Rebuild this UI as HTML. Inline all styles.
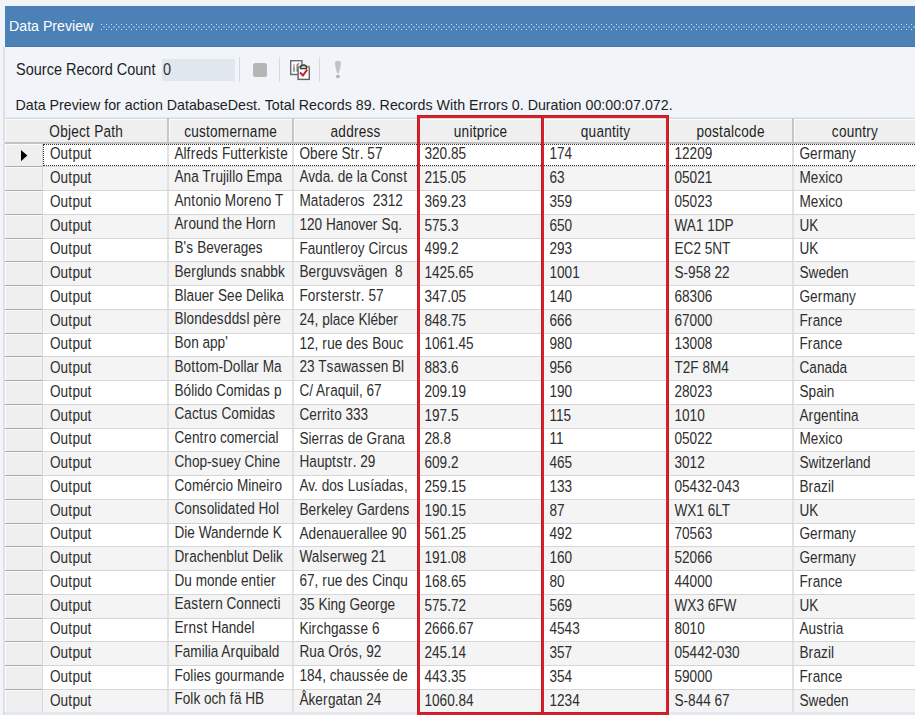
<!DOCTYPE html><html><head><meta charset="utf-8"><style>
*{margin:0;padding:0;box-sizing:border-box}
html,body{width:915px;height:715px;overflow:hidden;background:#f1f5f9;font-family:"Liberation Sans",sans-serif;position:relative}
.a{position:absolute}
.t{position:absolute;white-space:pre;line-height:1}
.t i{font-style:normal;letter-spacing:0.45px}
</style></head><body><div class="a" style="left:3px;top:47px;width:2px;height:668px;background:#dde1e6"></div>
<div class="a" style="left:5px;top:6px;width:910px;height:41px;background:#4b81b7"></div>
<div class="a" style="left:5px;top:46px;width:910px;height:1px;background:#4675a6"></div>
<div class="t" style="left:9px;top:18.980px;font-size:14.2px;color:#fff;transform:scaleY(1.07);transform-origin:0 12.020px;">Data Preview</div>
<svg class="a" style="left:0;top:0" width="915" height="50"><g fill="#d6ebff"><rect x="101" y="24" width="1" height="1"/><rect x="101" y="29" width="1" height="1"/><rect x="103" y="26.5" width="2" height="1" fill="#a9cdf2"/><rect x="106" y="24" width="1" height="1"/><rect x="106" y="29" width="1" height="1"/><rect x="108" y="26.5" width="2" height="1" fill="#a9cdf2"/><rect x="111" y="24" width="1" height="1"/><rect x="111" y="29" width="1" height="1"/><rect x="113" y="26.5" width="2" height="1" fill="#a9cdf2"/><rect x="116" y="24" width="1" height="1"/><rect x="116" y="29" width="1" height="1"/><rect x="118" y="26.5" width="2" height="1" fill="#a9cdf2"/><rect x="121" y="24" width="1" height="1"/><rect x="121" y="29" width="1" height="1"/><rect x="123" y="26.5" width="2" height="1" fill="#a9cdf2"/><rect x="126" y="24" width="1" height="1"/><rect x="126" y="29" width="1" height="1"/><rect x="128" y="26.5" width="2" height="1" fill="#a9cdf2"/><rect x="131" y="24" width="1" height="1"/><rect x="131" y="29" width="1" height="1"/><rect x="133" y="26.5" width="2" height="1" fill="#a9cdf2"/><rect x="136" y="24" width="1" height="1"/><rect x="136" y="29" width="1" height="1"/><rect x="138" y="26.5" width="2" height="1" fill="#a9cdf2"/><rect x="141" y="24" width="1" height="1"/><rect x="141" y="29" width="1" height="1"/><rect x="143" y="26.5" width="2" height="1" fill="#a9cdf2"/><rect x="146" y="24" width="1" height="1"/><rect x="146" y="29" width="1" height="1"/><rect x="148" y="26.5" width="2" height="1" fill="#a9cdf2"/><rect x="151" y="24" width="1" height="1"/><rect x="151" y="29" width="1" height="1"/><rect x="153" y="26.5" width="2" height="1" fill="#a9cdf2"/><rect x="156" y="24" width="1" height="1"/><rect x="156" y="29" width="1" height="1"/><rect x="158" y="26.5" width="2" height="1" fill="#a9cdf2"/><rect x="161" y="24" width="1" height="1"/><rect x="161" y="29" width="1" height="1"/><rect x="163" y="26.5" width="2" height="1" fill="#a9cdf2"/><rect x="166" y="24" width="1" height="1"/><rect x="166" y="29" width="1" height="1"/><rect x="168" y="26.5" width="2" height="1" fill="#a9cdf2"/><rect x="171" y="24" width="1" height="1"/><rect x="171" y="29" width="1" height="1"/><rect x="173" y="26.5" width="2" height="1" fill="#a9cdf2"/><rect x="176" y="24" width="1" height="1"/><rect x="176" y="29" width="1" height="1"/><rect x="178" y="26.5" width="2" height="1" fill="#a9cdf2"/><rect x="181" y="24" width="1" height="1"/><rect x="181" y="29" width="1" height="1"/><rect x="183" y="26.5" width="2" height="1" fill="#a9cdf2"/><rect x="186" y="24" width="1" height="1"/><rect x="186" y="29" width="1" height="1"/><rect x="188" y="26.5" width="2" height="1" fill="#a9cdf2"/><rect x="191" y="24" width="1" height="1"/><rect x="191" y="29" width="1" height="1"/><rect x="193" y="26.5" width="2" height="1" fill="#a9cdf2"/><rect x="196" y="24" width="1" height="1"/><rect x="196" y="29" width="1" height="1"/><rect x="198" y="26.5" width="2" height="1" fill="#a9cdf2"/><rect x="201" y="24" width="1" height="1"/><rect x="201" y="29" width="1" height="1"/><rect x="203" y="26.5" width="2" height="1" fill="#a9cdf2"/><rect x="206" y="24" width="1" height="1"/><rect x="206" y="29" width="1" height="1"/><rect x="208" y="26.5" width="2" height="1" fill="#a9cdf2"/><rect x="211" y="24" width="1" height="1"/><rect x="211" y="29" width="1" height="1"/><rect x="213" y="26.5" width="2" height="1" fill="#a9cdf2"/><rect x="216" y="24" width="1" height="1"/><rect x="216" y="29" width="1" height="1"/><rect x="218" y="26.5" width="2" height="1" fill="#a9cdf2"/><rect x="221" y="24" width="1" height="1"/><rect x="221" y="29" width="1" height="1"/><rect x="223" y="26.5" width="2" height="1" fill="#a9cdf2"/><rect x="226" y="24" width="1" height="1"/><rect x="226" y="29" width="1" height="1"/><rect x="228" y="26.5" width="2" height="1" fill="#a9cdf2"/><rect x="231" y="24" width="1" height="1"/><rect x="231" y="29" width="1" height="1"/><rect x="233" y="26.5" width="2" height="1" fill="#a9cdf2"/><rect x="236" y="24" width="1" height="1"/><rect x="236" y="29" width="1" height="1"/><rect x="238" y="26.5" width="2" height="1" fill="#a9cdf2"/><rect x="241" y="24" width="1" height="1"/><rect x="241" y="29" width="1" height="1"/><rect x="243" y="26.5" width="2" height="1" fill="#a9cdf2"/><rect x="246" y="24" width="1" height="1"/><rect x="246" y="29" width="1" height="1"/><rect x="248" y="26.5" width="2" height="1" fill="#a9cdf2"/><rect x="251" y="24" width="1" height="1"/><rect x="251" y="29" width="1" height="1"/><rect x="253" y="26.5" width="2" height="1" fill="#a9cdf2"/><rect x="256" y="24" width="1" height="1"/><rect x="256" y="29" width="1" height="1"/><rect x="258" y="26.5" width="2" height="1" fill="#a9cdf2"/><rect x="261" y="24" width="1" height="1"/><rect x="261" y="29" width="1" height="1"/><rect x="263" y="26.5" width="2" height="1" fill="#a9cdf2"/><rect x="266" y="24" width="1" height="1"/><rect x="266" y="29" width="1" height="1"/><rect x="268" y="26.5" width="2" height="1" fill="#a9cdf2"/><rect x="271" y="24" width="1" height="1"/><rect x="271" y="29" width="1" height="1"/><rect x="273" y="26.5" width="2" height="1" fill="#a9cdf2"/><rect x="276" y="24" width="1" height="1"/><rect x="276" y="29" width="1" height="1"/><rect x="278" y="26.5" width="2" height="1" fill="#a9cdf2"/><rect x="281" y="24" width="1" height="1"/><rect x="281" y="29" width="1" height="1"/><rect x="283" y="26.5" width="2" height="1" fill="#a9cdf2"/><rect x="286" y="24" width="1" height="1"/><rect x="286" y="29" width="1" height="1"/><rect x="288" y="26.5" width="2" height="1" fill="#a9cdf2"/><rect x="291" y="24" width="1" height="1"/><rect x="291" y="29" width="1" height="1"/><rect x="293" y="26.5" width="2" height="1" fill="#a9cdf2"/><rect x="296" y="24" width="1" height="1"/><rect x="296" y="29" width="1" height="1"/><rect x="298" y="26.5" width="2" height="1" fill="#a9cdf2"/><rect x="301" y="24" width="1" height="1"/><rect x="301" y="29" width="1" height="1"/><rect x="303" y="26.5" width="2" height="1" fill="#a9cdf2"/><rect x="306" y="24" width="1" height="1"/><rect x="306" y="29" width="1" height="1"/><rect x="308" y="26.5" width="2" height="1" fill="#a9cdf2"/><rect x="311" y="24" width="1" height="1"/><rect x="311" y="29" width="1" height="1"/><rect x="313" y="26.5" width="2" height="1" fill="#a9cdf2"/><rect x="316" y="24" width="1" height="1"/><rect x="316" y="29" width="1" height="1"/><rect x="318" y="26.5" width="2" height="1" fill="#a9cdf2"/><rect x="321" y="24" width="1" height="1"/><rect x="321" y="29" width="1" height="1"/><rect x="323" y="26.5" width="2" height="1" fill="#a9cdf2"/><rect x="326" y="24" width="1" height="1"/><rect x="326" y="29" width="1" height="1"/><rect x="328" y="26.5" width="2" height="1" fill="#a9cdf2"/><rect x="331" y="24" width="1" height="1"/><rect x="331" y="29" width="1" height="1"/><rect x="333" y="26.5" width="2" height="1" fill="#a9cdf2"/><rect x="336" y="24" width="1" height="1"/><rect x="336" y="29" width="1" height="1"/><rect x="338" y="26.5" width="2" height="1" fill="#a9cdf2"/><rect x="341" y="24" width="1" height="1"/><rect x="341" y="29" width="1" height="1"/><rect x="343" y="26.5" width="2" height="1" fill="#a9cdf2"/><rect x="346" y="24" width="1" height="1"/><rect x="346" y="29" width="1" height="1"/><rect x="348" y="26.5" width="2" height="1" fill="#a9cdf2"/><rect x="351" y="24" width="1" height="1"/><rect x="351" y="29" width="1" height="1"/><rect x="353" y="26.5" width="2" height="1" fill="#a9cdf2"/><rect x="356" y="24" width="1" height="1"/><rect x="356" y="29" width="1" height="1"/><rect x="358" y="26.5" width="2" height="1" fill="#a9cdf2"/><rect x="361" y="24" width="1" height="1"/><rect x="361" y="29" width="1" height="1"/><rect x="363" y="26.5" width="2" height="1" fill="#a9cdf2"/><rect x="366" y="24" width="1" height="1"/><rect x="366" y="29" width="1" height="1"/><rect x="368" y="26.5" width="2" height="1" fill="#a9cdf2"/><rect x="371" y="24" width="1" height="1"/><rect x="371" y="29" width="1" height="1"/><rect x="373" y="26.5" width="2" height="1" fill="#a9cdf2"/><rect x="376" y="24" width="1" height="1"/><rect x="376" y="29" width="1" height="1"/><rect x="378" y="26.5" width="2" height="1" fill="#a9cdf2"/><rect x="381" y="24" width="1" height="1"/><rect x="381" y="29" width="1" height="1"/><rect x="383" y="26.5" width="2" height="1" fill="#a9cdf2"/><rect x="386" y="24" width="1" height="1"/><rect x="386" y="29" width="1" height="1"/><rect x="388" y="26.5" width="2" height="1" fill="#a9cdf2"/><rect x="391" y="24" width="1" height="1"/><rect x="391" y="29" width="1" height="1"/><rect x="393" y="26.5" width="2" height="1" fill="#a9cdf2"/><rect x="396" y="24" width="1" height="1"/><rect x="396" y="29" width="1" height="1"/><rect x="398" y="26.5" width="2" height="1" fill="#a9cdf2"/><rect x="401" y="24" width="1" height="1"/><rect x="401" y="29" width="1" height="1"/><rect x="403" y="26.5" width="2" height="1" fill="#a9cdf2"/><rect x="406" y="24" width="1" height="1"/><rect x="406" y="29" width="1" height="1"/><rect x="408" y="26.5" width="2" height="1" fill="#a9cdf2"/><rect x="411" y="24" width="1" height="1"/><rect x="411" y="29" width="1" height="1"/><rect x="413" y="26.5" width="2" height="1" fill="#a9cdf2"/><rect x="416" y="24" width="1" height="1"/><rect x="416" y="29" width="1" height="1"/><rect x="418" y="26.5" width="2" height="1" fill="#a9cdf2"/><rect x="421" y="24" width="1" height="1"/><rect x="421" y="29" width="1" height="1"/><rect x="423" y="26.5" width="2" height="1" fill="#a9cdf2"/><rect x="426" y="24" width="1" height="1"/><rect x="426" y="29" width="1" height="1"/><rect x="428" y="26.5" width="2" height="1" fill="#a9cdf2"/><rect x="431" y="24" width="1" height="1"/><rect x="431" y="29" width="1" height="1"/><rect x="433" y="26.5" width="2" height="1" fill="#a9cdf2"/><rect x="436" y="24" width="1" height="1"/><rect x="436" y="29" width="1" height="1"/><rect x="438" y="26.5" width="2" height="1" fill="#a9cdf2"/><rect x="441" y="24" width="1" height="1"/><rect x="441" y="29" width="1" height="1"/><rect x="443" y="26.5" width="2" height="1" fill="#a9cdf2"/><rect x="446" y="24" width="1" height="1"/><rect x="446" y="29" width="1" height="1"/><rect x="448" y="26.5" width="2" height="1" fill="#a9cdf2"/><rect x="451" y="24" width="1" height="1"/><rect x="451" y="29" width="1" height="1"/><rect x="453" y="26.5" width="2" height="1" fill="#a9cdf2"/><rect x="456" y="24" width="1" height="1"/><rect x="456" y="29" width="1" height="1"/><rect x="458" y="26.5" width="2" height="1" fill="#a9cdf2"/><rect x="461" y="24" width="1" height="1"/><rect x="461" y="29" width="1" height="1"/><rect x="463" y="26.5" width="2" height="1" fill="#a9cdf2"/><rect x="466" y="24" width="1" height="1"/><rect x="466" y="29" width="1" height="1"/><rect x="468" y="26.5" width="2" height="1" fill="#a9cdf2"/><rect x="471" y="24" width="1" height="1"/><rect x="471" y="29" width="1" height="1"/><rect x="473" y="26.5" width="2" height="1" fill="#a9cdf2"/><rect x="476" y="24" width="1" height="1"/><rect x="476" y="29" width="1" height="1"/><rect x="478" y="26.5" width="2" height="1" fill="#a9cdf2"/><rect x="481" y="24" width="1" height="1"/><rect x="481" y="29" width="1" height="1"/><rect x="483" y="26.5" width="2" height="1" fill="#a9cdf2"/><rect x="486" y="24" width="1" height="1"/><rect x="486" y="29" width="1" height="1"/><rect x="488" y="26.5" width="2" height="1" fill="#a9cdf2"/><rect x="491" y="24" width="1" height="1"/><rect x="491" y="29" width="1" height="1"/><rect x="493" y="26.5" width="2" height="1" fill="#a9cdf2"/><rect x="496" y="24" width="1" height="1"/><rect x="496" y="29" width="1" height="1"/><rect x="498" y="26.5" width="2" height="1" fill="#a9cdf2"/><rect x="501" y="24" width="1" height="1"/><rect x="501" y="29" width="1" height="1"/><rect x="503" y="26.5" width="2" height="1" fill="#a9cdf2"/><rect x="506" y="24" width="1" height="1"/><rect x="506" y="29" width="1" height="1"/><rect x="508" y="26.5" width="2" height="1" fill="#a9cdf2"/><rect x="511" y="24" width="1" height="1"/><rect x="511" y="29" width="1" height="1"/><rect x="513" y="26.5" width="2" height="1" fill="#a9cdf2"/><rect x="516" y="24" width="1" height="1"/><rect x="516" y="29" width="1" height="1"/><rect x="518" y="26.5" width="2" height="1" fill="#a9cdf2"/><rect x="521" y="24" width="1" height="1"/><rect x="521" y="29" width="1" height="1"/><rect x="523" y="26.5" width="2" height="1" fill="#a9cdf2"/><rect x="526" y="24" width="1" height="1"/><rect x="526" y="29" width="1" height="1"/><rect x="528" y="26.5" width="2" height="1" fill="#a9cdf2"/><rect x="531" y="24" width="1" height="1"/><rect x="531" y="29" width="1" height="1"/><rect x="533" y="26.5" width="2" height="1" fill="#a9cdf2"/><rect x="536" y="24" width="1" height="1"/><rect x="536" y="29" width="1" height="1"/><rect x="538" y="26.5" width="2" height="1" fill="#a9cdf2"/><rect x="541" y="24" width="1" height="1"/><rect x="541" y="29" width="1" height="1"/><rect x="543" y="26.5" width="2" height="1" fill="#a9cdf2"/><rect x="546" y="24" width="1" height="1"/><rect x="546" y="29" width="1" height="1"/><rect x="548" y="26.5" width="2" height="1" fill="#a9cdf2"/><rect x="551" y="24" width="1" height="1"/><rect x="551" y="29" width="1" height="1"/><rect x="553" y="26.5" width="2" height="1" fill="#a9cdf2"/><rect x="556" y="24" width="1" height="1"/><rect x="556" y="29" width="1" height="1"/><rect x="558" y="26.5" width="2" height="1" fill="#a9cdf2"/><rect x="561" y="24" width="1" height="1"/><rect x="561" y="29" width="1" height="1"/><rect x="563" y="26.5" width="2" height="1" fill="#a9cdf2"/><rect x="566" y="24" width="1" height="1"/><rect x="566" y="29" width="1" height="1"/><rect x="568" y="26.5" width="2" height="1" fill="#a9cdf2"/><rect x="571" y="24" width="1" height="1"/><rect x="571" y="29" width="1" height="1"/><rect x="573" y="26.5" width="2" height="1" fill="#a9cdf2"/><rect x="576" y="24" width="1" height="1"/><rect x="576" y="29" width="1" height="1"/><rect x="578" y="26.5" width="2" height="1" fill="#a9cdf2"/><rect x="581" y="24" width="1" height="1"/><rect x="581" y="29" width="1" height="1"/><rect x="583" y="26.5" width="2" height="1" fill="#a9cdf2"/><rect x="586" y="24" width="1" height="1"/><rect x="586" y="29" width="1" height="1"/><rect x="588" y="26.5" width="2" height="1" fill="#a9cdf2"/><rect x="591" y="24" width="1" height="1"/><rect x="591" y="29" width="1" height="1"/><rect x="593" y="26.5" width="2" height="1" fill="#a9cdf2"/><rect x="596" y="24" width="1" height="1"/><rect x="596" y="29" width="1" height="1"/><rect x="598" y="26.5" width="2" height="1" fill="#a9cdf2"/><rect x="601" y="24" width="1" height="1"/><rect x="601" y="29" width="1" height="1"/><rect x="603" y="26.5" width="2" height="1" fill="#a9cdf2"/><rect x="606" y="24" width="1" height="1"/><rect x="606" y="29" width="1" height="1"/><rect x="608" y="26.5" width="2" height="1" fill="#a9cdf2"/><rect x="611" y="24" width="1" height="1"/><rect x="611" y="29" width="1" height="1"/><rect x="613" y="26.5" width="2" height="1" fill="#a9cdf2"/><rect x="616" y="24" width="1" height="1"/><rect x="616" y="29" width="1" height="1"/><rect x="618" y="26.5" width="2" height="1" fill="#a9cdf2"/><rect x="621" y="24" width="1" height="1"/><rect x="621" y="29" width="1" height="1"/><rect x="623" y="26.5" width="2" height="1" fill="#a9cdf2"/><rect x="626" y="24" width="1" height="1"/><rect x="626" y="29" width="1" height="1"/><rect x="628" y="26.5" width="2" height="1" fill="#a9cdf2"/><rect x="631" y="24" width="1" height="1"/><rect x="631" y="29" width="1" height="1"/><rect x="633" y="26.5" width="2" height="1" fill="#a9cdf2"/><rect x="636" y="24" width="1" height="1"/><rect x="636" y="29" width="1" height="1"/><rect x="638" y="26.5" width="2" height="1" fill="#a9cdf2"/><rect x="641" y="24" width="1" height="1"/><rect x="641" y="29" width="1" height="1"/><rect x="643" y="26.5" width="2" height="1" fill="#a9cdf2"/><rect x="646" y="24" width="1" height="1"/><rect x="646" y="29" width="1" height="1"/><rect x="648" y="26.5" width="2" height="1" fill="#a9cdf2"/><rect x="651" y="24" width="1" height="1"/><rect x="651" y="29" width="1" height="1"/><rect x="653" y="26.5" width="2" height="1" fill="#a9cdf2"/><rect x="656" y="24" width="1" height="1"/><rect x="656" y="29" width="1" height="1"/><rect x="658" y="26.5" width="2" height="1" fill="#a9cdf2"/><rect x="661" y="24" width="1" height="1"/><rect x="661" y="29" width="1" height="1"/><rect x="663" y="26.5" width="2" height="1" fill="#a9cdf2"/><rect x="666" y="24" width="1" height="1"/><rect x="666" y="29" width="1" height="1"/><rect x="668" y="26.5" width="2" height="1" fill="#a9cdf2"/><rect x="671" y="24" width="1" height="1"/><rect x="671" y="29" width="1" height="1"/><rect x="673" y="26.5" width="2" height="1" fill="#a9cdf2"/><rect x="676" y="24" width="1" height="1"/><rect x="676" y="29" width="1" height="1"/><rect x="678" y="26.5" width="2" height="1" fill="#a9cdf2"/><rect x="681" y="24" width="1" height="1"/><rect x="681" y="29" width="1" height="1"/><rect x="683" y="26.5" width="2" height="1" fill="#a9cdf2"/><rect x="686" y="24" width="1" height="1"/><rect x="686" y="29" width="1" height="1"/><rect x="688" y="26.5" width="2" height="1" fill="#a9cdf2"/><rect x="691" y="24" width="1" height="1"/><rect x="691" y="29" width="1" height="1"/><rect x="693" y="26.5" width="2" height="1" fill="#a9cdf2"/><rect x="696" y="24" width="1" height="1"/><rect x="696" y="29" width="1" height="1"/><rect x="698" y="26.5" width="2" height="1" fill="#a9cdf2"/><rect x="701" y="24" width="1" height="1"/><rect x="701" y="29" width="1" height="1"/><rect x="703" y="26.5" width="2" height="1" fill="#a9cdf2"/><rect x="706" y="24" width="1" height="1"/><rect x="706" y="29" width="1" height="1"/><rect x="708" y="26.5" width="2" height="1" fill="#a9cdf2"/><rect x="711" y="24" width="1" height="1"/><rect x="711" y="29" width="1" height="1"/><rect x="713" y="26.5" width="2" height="1" fill="#a9cdf2"/><rect x="716" y="24" width="1" height="1"/><rect x="716" y="29" width="1" height="1"/><rect x="718" y="26.5" width="2" height="1" fill="#a9cdf2"/><rect x="721" y="24" width="1" height="1"/><rect x="721" y="29" width="1" height="1"/><rect x="723" y="26.5" width="2" height="1" fill="#a9cdf2"/><rect x="726" y="24" width="1" height="1"/><rect x="726" y="29" width="1" height="1"/><rect x="728" y="26.5" width="2" height="1" fill="#a9cdf2"/><rect x="731" y="24" width="1" height="1"/><rect x="731" y="29" width="1" height="1"/><rect x="733" y="26.5" width="2" height="1" fill="#a9cdf2"/><rect x="736" y="24" width="1" height="1"/><rect x="736" y="29" width="1" height="1"/><rect x="738" y="26.5" width="2" height="1" fill="#a9cdf2"/><rect x="741" y="24" width="1" height="1"/><rect x="741" y="29" width="1" height="1"/><rect x="743" y="26.5" width="2" height="1" fill="#a9cdf2"/><rect x="746" y="24" width="1" height="1"/><rect x="746" y="29" width="1" height="1"/><rect x="748" y="26.5" width="2" height="1" fill="#a9cdf2"/><rect x="751" y="24" width="1" height="1"/><rect x="751" y="29" width="1" height="1"/><rect x="753" y="26.5" width="2" height="1" fill="#a9cdf2"/><rect x="756" y="24" width="1" height="1"/><rect x="756" y="29" width="1" height="1"/><rect x="758" y="26.5" width="2" height="1" fill="#a9cdf2"/><rect x="761" y="24" width="1" height="1"/><rect x="761" y="29" width="1" height="1"/><rect x="763" y="26.5" width="2" height="1" fill="#a9cdf2"/><rect x="766" y="24" width="1" height="1"/><rect x="766" y="29" width="1" height="1"/><rect x="768" y="26.5" width="2" height="1" fill="#a9cdf2"/><rect x="771" y="24" width="1" height="1"/><rect x="771" y="29" width="1" height="1"/><rect x="773" y="26.5" width="2" height="1" fill="#a9cdf2"/><rect x="776" y="24" width="1" height="1"/><rect x="776" y="29" width="1" height="1"/><rect x="778" y="26.5" width="2" height="1" fill="#a9cdf2"/><rect x="781" y="24" width="1" height="1"/><rect x="781" y="29" width="1" height="1"/><rect x="783" y="26.5" width="2" height="1" fill="#a9cdf2"/><rect x="786" y="24" width="1" height="1"/><rect x="786" y="29" width="1" height="1"/><rect x="788" y="26.5" width="2" height="1" fill="#a9cdf2"/><rect x="791" y="24" width="1" height="1"/><rect x="791" y="29" width="1" height="1"/><rect x="793" y="26.5" width="2" height="1" fill="#a9cdf2"/><rect x="796" y="24" width="1" height="1"/><rect x="796" y="29" width="1" height="1"/><rect x="798" y="26.5" width="2" height="1" fill="#a9cdf2"/><rect x="801" y="24" width="1" height="1"/><rect x="801" y="29" width="1" height="1"/><rect x="803" y="26.5" width="2" height="1" fill="#a9cdf2"/><rect x="806" y="24" width="1" height="1"/><rect x="806" y="29" width="1" height="1"/><rect x="808" y="26.5" width="2" height="1" fill="#a9cdf2"/><rect x="811" y="24" width="1" height="1"/><rect x="811" y="29" width="1" height="1"/><rect x="813" y="26.5" width="2" height="1" fill="#a9cdf2"/><rect x="816" y="24" width="1" height="1"/><rect x="816" y="29" width="1" height="1"/><rect x="818" y="26.5" width="2" height="1" fill="#a9cdf2"/><rect x="821" y="24" width="1" height="1"/><rect x="821" y="29" width="1" height="1"/><rect x="823" y="26.5" width="2" height="1" fill="#a9cdf2"/><rect x="826" y="24" width="1" height="1"/><rect x="826" y="29" width="1" height="1"/><rect x="828" y="26.5" width="2" height="1" fill="#a9cdf2"/><rect x="831" y="24" width="1" height="1"/><rect x="831" y="29" width="1" height="1"/><rect x="833" y="26.5" width="2" height="1" fill="#a9cdf2"/><rect x="836" y="24" width="1" height="1"/><rect x="836" y="29" width="1" height="1"/><rect x="838" y="26.5" width="2" height="1" fill="#a9cdf2"/><rect x="841" y="24" width="1" height="1"/><rect x="841" y="29" width="1" height="1"/><rect x="843" y="26.5" width="2" height="1" fill="#a9cdf2"/><rect x="846" y="24" width="1" height="1"/><rect x="846" y="29" width="1" height="1"/><rect x="848" y="26.5" width="2" height="1" fill="#a9cdf2"/><rect x="851" y="24" width="1" height="1"/><rect x="851" y="29" width="1" height="1"/><rect x="853" y="26.5" width="2" height="1" fill="#a9cdf2"/><rect x="856" y="24" width="1" height="1"/><rect x="856" y="29" width="1" height="1"/><rect x="858" y="26.5" width="2" height="1" fill="#a9cdf2"/><rect x="861" y="24" width="1" height="1"/><rect x="861" y="29" width="1" height="1"/><rect x="863" y="26.5" width="2" height="1" fill="#a9cdf2"/><rect x="866" y="24" width="1" height="1"/><rect x="866" y="29" width="1" height="1"/><rect x="868" y="26.5" width="2" height="1" fill="#a9cdf2"/><rect x="871" y="24" width="1" height="1"/><rect x="871" y="29" width="1" height="1"/><rect x="873" y="26.5" width="2" height="1" fill="#a9cdf2"/><rect x="876" y="24" width="1" height="1"/><rect x="876" y="29" width="1" height="1"/><rect x="878" y="26.5" width="2" height="1" fill="#a9cdf2"/><rect x="881" y="24" width="1" height="1"/><rect x="881" y="29" width="1" height="1"/><rect x="883" y="26.5" width="2" height="1" fill="#a9cdf2"/><rect x="886" y="24" width="1" height="1"/><rect x="886" y="29" width="1" height="1"/><rect x="888" y="26.5" width="2" height="1" fill="#a9cdf2"/><rect x="891" y="24" width="1" height="1"/><rect x="891" y="29" width="1" height="1"/><rect x="893" y="26.5" width="2" height="1" fill="#a9cdf2"/><rect x="896" y="24" width="1" height="1"/><rect x="896" y="29" width="1" height="1"/><rect x="898" y="26.5" width="2" height="1" fill="#a9cdf2"/><rect x="901" y="24" width="1" height="1"/><rect x="901" y="29" width="1" height="1"/><rect x="903" y="26.5" width="2" height="1" fill="#a9cdf2"/><rect x="906" y="24" width="1" height="1"/><rect x="906" y="29" width="1" height="1"/><rect x="908" y="26.5" width="2" height="1" fill="#a9cdf2"/><rect x="911" y="24" width="1" height="1"/><rect x="911" y="29" width="1" height="1"/><rect x="913" y="26.5" width="2" height="1" fill="#a9cdf2"/></g></svg>
<div class="t" style="left:16px;top:63.226px;font-size:14.5px;color:#1e1e1e;transform:scaleY(1.12);transform-origin:0 12.274px;">Source Record Count</div>
<div class="a" style="left:162px;top:59px;width:73px;height:22px;background:#e1e7ef"></div>
<div class="t" style="left:163px;top:63.226px;font-size:14.5px;color:#333;transform:scaleY(1.12);transform-origin:0 12.274px;">0</div>
<div class="a" style="left:239px;top:57px;width:1px;height:25px;background:#d6dade"></div>
<div class="a" style="left:279px;top:57px;width:1px;height:25px;background:#d6dade"></div>
<div class="a" style="left:319px;top:57px;width:1px;height:25px;background:#d6dade"></div>
<div class="a" style="left:252.5px;top:62.5px;width:14px;height:14px;border-radius:2.5px;background:#b5b5b6"></div>
<svg class="a" style="left:286px;top:56px" width="28" height="28" viewBox="0 0 28 28">
<rect x="4.7" y="4.7" width="11.2" height="13.8" fill="#fbfbfb" stroke="#676c71" stroke-width="1.4"/>
<rect x="7.2" y="10.4" width="1.6" height="5.4" fill="#85898d"/><rect x="7.2" y="8.4" width="1.6" height="1.2" fill="#85898d"/>
<path d="M11.2 15.8V9.8q0-2 2-2" stroke="#85898d" stroke-width="1.5" fill="none"/>
<rect x="12.1" y="11" width="11.2" height="12.4" fill="#fdfdfd" stroke="#5c6166" stroke-width="1.4"/>
<rect x="11.4" y="9.8" width="12.6" height="2" fill="#b88c58"/>
<path d="M14.6 12.6V11.2q0-2.2 2.9-2.2t2.9 2.2V12.6z" fill="#c5d0da" stroke="#3a3f44" stroke-width="1.3"/>
<path d="M14 16.5l2.9 3 4.3-5.9" stroke="#c81d25" stroke-width="2" fill="none"/>
</svg>
<svg class="a" style="left:330px;top:58px" width="16" height="22" viewBox="0 0 16 22">
<path d="M4.9 5.6Q4.9 2.7 7.9 2.7Q10.9 2.7 10.9 5.6Q10.6 9 8.7 15.2H7.1Q5.2 9 4.9 5.6z" fill="#c2c2c2"/>
<ellipse cx="7.9" cy="18.4" rx="1.9" ry="1.6" fill="#b0b0b0"/>
</svg>
<div class="t" style="left:15.5px;top:98.037px;font-size:14.25px;color:#1e1e1e;transform:scaleY(1.09);transform-origin:0 12.063px;">Data Preview for action DatabaseDest. Total Records 89. Records With Errors 0. Duration 00:00:07.072.</div>
<div class="a" style="left:5px;top:117px;width:910px;height:595px;background:#f4f4f4"></div>
<div class="a" style="left:5px;top:117px;width:910px;height:1px;background:#e4e7ea"></div>
<div class="a" style="left:5px;top:118px;width:910px;height:1px;background:#d8dbde"></div>
<div class="a" style="left:5px;top:119px;width:910px;height:1px;background:#fbfbfb"></div>
<div class="a" style="left:5px;top:120px;width:910px;height:22px;background:#efefef"></div>
<div class="a" style="left:5px;top:119px;width:1px;height:23px;background:#fbfbfb"></div>
<div class="a" style="left:5px;top:142px;width:910px;height:2px;background:#c3c3c3"></div>
<div class="t" style="left:5px;top:125.988px;font-size:13.6px;color:#1e1e1e;transform:scaleY(1.22);transform-origin:0 11.512px;width:162.5px;text-align:center;letter-spacing:0.25px">Object Path</div>
<div class="a" style="left:167px;top:118px;width:2px;height:24px;background:#c6c6c6"></div>
<div class="a" style="left:169px;top:119px;width:1px;height:23px;background:#fcfcfc"></div>
<div class="t" style="left:168.7px;top:125.988px;font-size:13.6px;color:#1e1e1e;transform:scaleY(1.22);transform-origin:0 11.512px;width:123.80000000000001px;text-align:center;letter-spacing:0.25px">customername</div>
<div class="a" style="left:292px;top:118px;width:2px;height:24px;background:#c6c6c6"></div>
<div class="a" style="left:294px;top:119px;width:1px;height:23px;background:#fcfcfc"></div>
<div class="t" style="left:293.7px;top:125.988px;font-size:13.6px;color:#1e1e1e;transform:scaleY(1.22);transform-origin:0 11.512px;width:123.80000000000001px;text-align:center;letter-spacing:0.25px">address</div>
<div class="a" style="left:417px;top:118px;width:2px;height:24px;background:#c6c6c6"></div>
<div class="a" style="left:419px;top:119px;width:1px;height:23px;background:#fcfcfc"></div>
<div class="t" style="left:418.7px;top:125.988px;font-size:13.6px;color:#1e1e1e;transform:scaleY(1.22);transform-origin:0 11.512px;width:123.80000000000001px;text-align:center;letter-spacing:0.25px">unitprice</div>
<div class="a" style="left:542px;top:118px;width:2px;height:24px;background:#c6c6c6"></div>
<div class="a" style="left:544px;top:119px;width:1px;height:23px;background:#fcfcfc"></div>
<div class="t" style="left:543.7px;top:125.988px;font-size:13.6px;color:#1e1e1e;transform:scaleY(1.22);transform-origin:0 11.512px;width:123.79999999999995px;text-align:center;letter-spacing:0.25px">quantity</div>
<div class="a" style="left:667px;top:118px;width:2px;height:24px;background:#c6c6c6"></div>
<div class="a" style="left:669px;top:119px;width:1px;height:23px;background:#fcfcfc"></div>
<div class="t" style="left:668.7px;top:125.988px;font-size:13.6px;color:#1e1e1e;transform:scaleY(1.22);transform-origin:0 11.512px;width:123.79999999999995px;text-align:center;letter-spacing:0.25px">postalcode</div>
<div class="a" style="left:792px;top:118px;width:2px;height:24px;background:#c6c6c6"></div>
<div class="a" style="left:794px;top:119px;width:1px;height:23px;background:#fcfcfc"></div>
<div class="t" style="left:792.5px;top:125.988px;font-size:13.6px;color:#1e1e1e;transform:scaleY(1.22);transform-origin:0 11.512px;width:125.0px;text-align:center;letter-spacing:0.25px">country</div>
<div class="a" style="left:43px;top:144px;width:872px;height:22px;background:#ffffff"></div>
<div class="a" style="left:5px;top:144px;width:37px;height:22px;background:#efefef;border-left:1px solid #fff;border-top:1px solid #fbfbfb"></div>
<div class="a" style="left:42px;top:144px;width:1px;height:22px;background:#d9d9d9"></div>
<div class="a" style="left:5px;top:166px;width:37px;height:1px;background:#a9a9a9"></div>
<div class="a" style="left:42px;top:166px;width:873px;height:1px;background:#d6d6d6"></div>
<div class="t" style="left:50px;top:148.338px;font-size:13.6px;color:#2e2e2e;transform:scaleY(1.22);transform-origin:0 11.512px;">Ou<i>t</i>pu<i>t</i></div>
<div class="t" style="left:174.5px;top:148.338px;font-size:13.6px;color:#2e2e2e;transform:scaleY(1.22);transform-origin:0 11.512px;">Al<i>f</i><i>r</i>ed<i>s</i> Fu<i>t</i><i>t</i>e<i>r</i>ki<i>s</i><i>t</i>e</div>
<div class="t" style="left:299.5px;top:148.338px;font-size:13.6px;color:#2e2e2e;transform:scaleY(1.22);transform-origin:0 11.512px;">Obe<i>r</i>e S<i>t</i><i>r</i>. 57</div>
<div class="t" style="left:424.5px;top:148.338px;font-size:13.6px;color:#2e2e2e;transform:scaleY(1.22);transform-origin:0 11.512px;">320.85</div>
<div class="t" style="left:549.5px;top:148.338px;font-size:13.6px;color:#2e2e2e;transform:scaleY(1.22);transform-origin:0 11.512px;">174</div>
<div class="t" style="left:674.5px;top:148.338px;font-size:13.6px;color:#2e2e2e;transform:scaleY(1.22);transform-origin:0 11.512px;">12209</div>
<div class="t" style="left:799.5px;top:148.338px;font-size:13.6px;color:#2e2e2e;transform:scaleY(1.22);transform-origin:0 11.512px;">Ge<i>r</i>many</div>
<div class="a" style="left:167px;top:144px;width:2px;height:22px;background:#e2e2e2"></div>
<div class="a" style="left:292px;top:144px;width:2px;height:22px;background:#e2e2e2"></div>
<div class="a" style="left:417px;top:144px;width:2px;height:22px;background:#e2e2e2"></div>
<div class="a" style="left:542px;top:144px;width:2px;height:22px;background:#e2e2e2"></div>
<div class="a" style="left:667px;top:144px;width:2px;height:22px;background:#e2e2e2"></div>
<div class="a" style="left:792px;top:144px;width:2px;height:22px;background:#e2e2e2"></div>
<div class="a" style="left:43px;top:167px;width:872px;height:23px;background:#f4f4f4"></div>
<div class="a" style="left:5px;top:167px;width:37px;height:23px;background:#efefef;border-left:1px solid #fff;border-top:1px solid #fbfbfb"></div>
<div class="a" style="left:42px;top:167px;width:1px;height:23px;background:#d9d9d9"></div>
<div class="a" style="left:5px;top:190px;width:37px;height:1px;background:#a9a9a9"></div>
<div class="a" style="left:42px;top:190px;width:873px;height:1px;background:#d6d6d6"></div>
<div class="t" style="left:50px;top:172.088px;font-size:13.6px;color:#2e2e2e;transform:scaleY(1.22);transform-origin:0 11.512px;">Ou<i>t</i>pu<i>t</i></div>
<div class="t" style="left:174.5px;top:170.888px;font-size:13.6px;color:#2e2e2e;transform:scaleY(1.22);transform-origin:0 11.512px;">Ana T<i>r</i>ujillo Empa</div>
<div class="t" style="left:299.5px;top:171.488px;font-size:13.6px;color:#2e2e2e;transform:scaleY(1.22);transform-origin:0 11.512px;">Avda. de la Con<i>s</i><i>t</i></div>
<div class="t" style="left:424.5px;top:172.088px;font-size:13.6px;color:#2e2e2e;transform:scaleY(1.22);transform-origin:0 11.512px;">215.05</div>
<div class="t" style="left:549.5px;top:172.088px;font-size:13.6px;color:#2e2e2e;transform:scaleY(1.22);transform-origin:0 11.512px;">63</div>
<div class="t" style="left:674.5px;top:172.088px;font-size:13.6px;color:#2e2e2e;transform:scaleY(1.22);transform-origin:0 11.512px;">05021</div>
<div class="t" style="left:799.5px;top:172.088px;font-size:13.6px;color:#2e2e2e;transform:scaleY(1.22);transform-origin:0 11.512px;">Mexico</div>
<div class="a" style="left:167px;top:167px;width:2px;height:23px;background:#e2e2e2"></div>
<div class="a" style="left:292px;top:167px;width:2px;height:23px;background:#e2e2e2"></div>
<div class="a" style="left:417px;top:167px;width:2px;height:23px;background:#e2e2e2"></div>
<div class="a" style="left:542px;top:167px;width:2px;height:23px;background:#e2e2e2"></div>
<div class="a" style="left:667px;top:167px;width:2px;height:23px;background:#e2e2e2"></div>
<div class="a" style="left:792px;top:167px;width:2px;height:23px;background:#e2e2e2"></div>
<div class="a" style="left:43px;top:191px;width:872px;height:23px;background:#ffffff"></div>
<div class="a" style="left:5px;top:191px;width:37px;height:23px;background:#efefef;border-left:1px solid #fff;border-top:1px solid #fbfbfb"></div>
<div class="a" style="left:42px;top:191px;width:1px;height:23px;background:#d9d9d9"></div>
<div class="a" style="left:5px;top:214px;width:37px;height:1px;background:#a9a9a9"></div>
<div class="a" style="left:42px;top:214px;width:873px;height:1px;background:#d6d6d6"></div>
<div class="t" style="left:50px;top:195.838px;font-size:13.6px;color:#2e2e2e;transform:scaleY(1.22);transform-origin:0 11.512px;">Ou<i>t</i>pu<i>t</i></div>
<div class="t" style="left:174.5px;top:194.638px;font-size:13.6px;color:#2e2e2e;transform:scaleY(1.22);transform-origin:0 11.512px;">An<i>t</i>onio Mo<i>r</i>eno T</div>
<div class="t" style="left:299.5px;top:195.238px;font-size:13.6px;color:#2e2e2e;transform:scaleY(1.22);transform-origin:0 11.512px;">Ma<i>t</i>ade<i>r</i>o<i>s</i>  2312</div>
<div class="t" style="left:424.5px;top:195.838px;font-size:13.6px;color:#2e2e2e;transform:scaleY(1.22);transform-origin:0 11.512px;">369.23</div>
<div class="t" style="left:549.5px;top:195.838px;font-size:13.6px;color:#2e2e2e;transform:scaleY(1.22);transform-origin:0 11.512px;">359</div>
<div class="t" style="left:674.5px;top:195.838px;font-size:13.6px;color:#2e2e2e;transform:scaleY(1.22);transform-origin:0 11.512px;">05023</div>
<div class="t" style="left:799.5px;top:195.838px;font-size:13.6px;color:#2e2e2e;transform:scaleY(1.22);transform-origin:0 11.512px;">Mexico</div>
<div class="a" style="left:167px;top:191px;width:2px;height:23px;background:#e2e2e2"></div>
<div class="a" style="left:292px;top:191px;width:2px;height:23px;background:#e2e2e2"></div>
<div class="a" style="left:417px;top:191px;width:2px;height:23px;background:#e2e2e2"></div>
<div class="a" style="left:542px;top:191px;width:2px;height:23px;background:#e2e2e2"></div>
<div class="a" style="left:667px;top:191px;width:2px;height:23px;background:#e2e2e2"></div>
<div class="a" style="left:792px;top:191px;width:2px;height:23px;background:#e2e2e2"></div>
<div class="a" style="left:43px;top:215px;width:872px;height:23px;background:#f4f4f4"></div>
<div class="a" style="left:5px;top:215px;width:37px;height:23px;background:#efefef;border-left:1px solid #fff;border-top:1px solid #fbfbfb"></div>
<div class="a" style="left:42px;top:215px;width:1px;height:23px;background:#d9d9d9"></div>
<div class="a" style="left:5px;top:238px;width:37px;height:1px;background:#a9a9a9"></div>
<div class="a" style="left:42px;top:238px;width:873px;height:1px;background:#d6d6d6"></div>
<div class="t" style="left:50px;top:219.588px;font-size:13.6px;color:#2e2e2e;transform:scaleY(1.22);transform-origin:0 11.512px;">Ou<i>t</i>pu<i>t</i></div>
<div class="t" style="left:174.5px;top:218.388px;font-size:13.6px;color:#2e2e2e;transform:scaleY(1.22);transform-origin:0 11.512px;">A<i>r</i>ound <i>t</i>he Ho<i>r</i>n</div>
<div class="t" style="left:299.5px;top:218.988px;font-size:13.6px;color:#2e2e2e;transform:scaleY(1.22);transform-origin:0 11.512px;">120 Hanove<i>r</i> Sq.</div>
<div class="t" style="left:424.5px;top:219.588px;font-size:13.6px;color:#2e2e2e;transform:scaleY(1.22);transform-origin:0 11.512px;">575.3</div>
<div class="t" style="left:549.5px;top:219.588px;font-size:13.6px;color:#2e2e2e;transform:scaleY(1.22);transform-origin:0 11.512px;">650</div>
<div class="t" style="left:674.5px;top:219.588px;font-size:13.6px;color:#2e2e2e;transform:scaleY(1.22);transform-origin:0 11.512px;">WA1 1DP</div>
<div class="t" style="left:799.5px;top:219.588px;font-size:13.6px;color:#2e2e2e;transform:scaleY(1.22);transform-origin:0 11.512px;">UK</div>
<div class="a" style="left:167px;top:215px;width:2px;height:23px;background:#e2e2e2"></div>
<div class="a" style="left:292px;top:215px;width:2px;height:23px;background:#e2e2e2"></div>
<div class="a" style="left:417px;top:215px;width:2px;height:23px;background:#e2e2e2"></div>
<div class="a" style="left:542px;top:215px;width:2px;height:23px;background:#e2e2e2"></div>
<div class="a" style="left:667px;top:215px;width:2px;height:23px;background:#e2e2e2"></div>
<div class="a" style="left:792px;top:215px;width:2px;height:23px;background:#e2e2e2"></div>
<div class="a" style="left:43px;top:239px;width:872px;height:22px;background:#ffffff"></div>
<div class="a" style="left:5px;top:239px;width:37px;height:22px;background:#efefef;border-left:1px solid #fff;border-top:1px solid #fbfbfb"></div>
<div class="a" style="left:42px;top:239px;width:1px;height:22px;background:#d9d9d9"></div>
<div class="a" style="left:5px;top:261px;width:37px;height:1px;background:#a9a9a9"></div>
<div class="a" style="left:42px;top:261px;width:873px;height:1px;background:#d6d6d6"></div>
<div class="t" style="left:50px;top:243.338px;font-size:13.6px;color:#2e2e2e;transform:scaleY(1.22);transform-origin:0 11.512px;">Ou<i>t</i>pu<i>t</i></div>
<div class="t" style="left:174.5px;top:242.138px;font-size:13.6px;color:#2e2e2e;transform:scaleY(1.22);transform-origin:0 11.512px;">B&#x27;<i>s</i> Beve<i>r</i>age<i>s</i></div>
<div class="t" style="left:299.5px;top:242.738px;font-size:13.6px;color:#2e2e2e;transform:scaleY(1.22);transform-origin:0 11.512px;">Faun<i>t</i>le<i>r</i>oy Ci<i>r</i>cu<i>s</i></div>
<div class="t" style="left:424.5px;top:243.338px;font-size:13.6px;color:#2e2e2e;transform:scaleY(1.22);transform-origin:0 11.512px;">499.2</div>
<div class="t" style="left:549.5px;top:243.338px;font-size:13.6px;color:#2e2e2e;transform:scaleY(1.22);transform-origin:0 11.512px;">293</div>
<div class="t" style="left:674.5px;top:243.338px;font-size:13.6px;color:#2e2e2e;transform:scaleY(1.22);transform-origin:0 11.512px;">EC2 5NT</div>
<div class="t" style="left:799.5px;top:243.338px;font-size:13.6px;color:#2e2e2e;transform:scaleY(1.22);transform-origin:0 11.512px;">UK</div>
<div class="a" style="left:167px;top:239px;width:2px;height:22px;background:#e2e2e2"></div>
<div class="a" style="left:292px;top:239px;width:2px;height:22px;background:#e2e2e2"></div>
<div class="a" style="left:417px;top:239px;width:2px;height:22px;background:#e2e2e2"></div>
<div class="a" style="left:542px;top:239px;width:2px;height:22px;background:#e2e2e2"></div>
<div class="a" style="left:667px;top:239px;width:2px;height:22px;background:#e2e2e2"></div>
<div class="a" style="left:792px;top:239px;width:2px;height:22px;background:#e2e2e2"></div>
<div class="a" style="left:43px;top:262px;width:872px;height:23px;background:#f4f4f4"></div>
<div class="a" style="left:5px;top:262px;width:37px;height:23px;background:#efefef;border-left:1px solid #fff;border-top:1px solid #fbfbfb"></div>
<div class="a" style="left:42px;top:262px;width:1px;height:23px;background:#d9d9d9"></div>
<div class="a" style="left:5px;top:285px;width:37px;height:1px;background:#a9a9a9"></div>
<div class="a" style="left:42px;top:285px;width:873px;height:1px;background:#d6d6d6"></div>
<div class="t" style="left:50px;top:267.088px;font-size:13.6px;color:#2e2e2e;transform:scaleY(1.22);transform-origin:0 11.512px;">Ou<i>t</i>pu<i>t</i></div>
<div class="t" style="left:174.5px;top:265.888px;font-size:13.6px;color:#2e2e2e;transform:scaleY(1.22);transform-origin:0 11.512px;">Be<i>r</i>glund<i>s</i> <i>s</i>nabbk</div>
<div class="t" style="left:299.5px;top:266.488px;font-size:13.6px;color:#2e2e2e;transform:scaleY(1.22);transform-origin:0 11.512px;">Be<i>r</i>guv<i>s</i>vägen  8</div>
<div class="t" style="left:424.5px;top:267.088px;font-size:13.6px;color:#2e2e2e;transform:scaleY(1.22);transform-origin:0 11.512px;">1425.65</div>
<div class="t" style="left:549.5px;top:267.088px;font-size:13.6px;color:#2e2e2e;transform:scaleY(1.22);transform-origin:0 11.512px;">1001</div>
<div class="t" style="left:674.5px;top:267.088px;font-size:13.6px;color:#2e2e2e;transform:scaleY(1.22);transform-origin:0 11.512px;">S-958 22</div>
<div class="t" style="left:799.5px;top:267.088px;font-size:13.6px;color:#2e2e2e;transform:scaleY(1.22);transform-origin:0 11.512px;">Sweden</div>
<div class="a" style="left:167px;top:262px;width:2px;height:23px;background:#e2e2e2"></div>
<div class="a" style="left:292px;top:262px;width:2px;height:23px;background:#e2e2e2"></div>
<div class="a" style="left:417px;top:262px;width:2px;height:23px;background:#e2e2e2"></div>
<div class="a" style="left:542px;top:262px;width:2px;height:23px;background:#e2e2e2"></div>
<div class="a" style="left:667px;top:262px;width:2px;height:23px;background:#e2e2e2"></div>
<div class="a" style="left:792px;top:262px;width:2px;height:23px;background:#e2e2e2"></div>
<div class="a" style="left:43px;top:286px;width:872px;height:23px;background:#ffffff"></div>
<div class="a" style="left:5px;top:286px;width:37px;height:23px;background:#efefef;border-left:1px solid #fff;border-top:1px solid #fbfbfb"></div>
<div class="a" style="left:42px;top:286px;width:1px;height:23px;background:#d9d9d9"></div>
<div class="a" style="left:5px;top:309px;width:37px;height:1px;background:#a9a9a9"></div>
<div class="a" style="left:42px;top:309px;width:873px;height:1px;background:#d6d6d6"></div>
<div class="t" style="left:50px;top:290.838px;font-size:13.6px;color:#2e2e2e;transform:scaleY(1.22);transform-origin:0 11.512px;">Ou<i>t</i>pu<i>t</i></div>
<div class="t" style="left:174.5px;top:289.638px;font-size:13.6px;color:#2e2e2e;transform:scaleY(1.22);transform-origin:0 11.512px;">Blaue<i>r</i> See Delika</div>
<div class="t" style="left:299.5px;top:290.238px;font-size:13.6px;color:#2e2e2e;transform:scaleY(1.22);transform-origin:0 11.512px;">Fo<i>r</i><i>s</i><i>t</i>e<i>r</i><i>s</i><i>t</i><i>r</i>. 57</div>
<div class="t" style="left:424.5px;top:290.838px;font-size:13.6px;color:#2e2e2e;transform:scaleY(1.22);transform-origin:0 11.512px;">347.05</div>
<div class="t" style="left:549.5px;top:290.838px;font-size:13.6px;color:#2e2e2e;transform:scaleY(1.22);transform-origin:0 11.512px;">140</div>
<div class="t" style="left:674.5px;top:290.838px;font-size:13.6px;color:#2e2e2e;transform:scaleY(1.22);transform-origin:0 11.512px;">68306</div>
<div class="t" style="left:799.5px;top:290.838px;font-size:13.6px;color:#2e2e2e;transform:scaleY(1.22);transform-origin:0 11.512px;">Ge<i>r</i>many</div>
<div class="a" style="left:167px;top:286px;width:2px;height:23px;background:#e2e2e2"></div>
<div class="a" style="left:292px;top:286px;width:2px;height:23px;background:#e2e2e2"></div>
<div class="a" style="left:417px;top:286px;width:2px;height:23px;background:#e2e2e2"></div>
<div class="a" style="left:542px;top:286px;width:2px;height:23px;background:#e2e2e2"></div>
<div class="a" style="left:667px;top:286px;width:2px;height:23px;background:#e2e2e2"></div>
<div class="a" style="left:792px;top:286px;width:2px;height:23px;background:#e2e2e2"></div>
<div class="a" style="left:43px;top:310px;width:872px;height:23px;background:#f4f4f4"></div>
<div class="a" style="left:5px;top:310px;width:37px;height:23px;background:#efefef;border-left:1px solid #fff;border-top:1px solid #fbfbfb"></div>
<div class="a" style="left:42px;top:310px;width:1px;height:23px;background:#d9d9d9"></div>
<div class="a" style="left:5px;top:333px;width:37px;height:1px;background:#a9a9a9"></div>
<div class="a" style="left:42px;top:333px;width:873px;height:1px;background:#d6d6d6"></div>
<div class="t" style="left:50px;top:314.588px;font-size:13.6px;color:#2e2e2e;transform:scaleY(1.22);transform-origin:0 11.512px;">Ou<i>t</i>pu<i>t</i></div>
<div class="t" style="left:174.5px;top:313.388px;font-size:13.6px;color:#2e2e2e;transform:scaleY(1.22);transform-origin:0 11.512px;">Blonde<i>s</i>dd<i>s</i>l pè<i>r</i>e</div>
<div class="t" style="left:299.5px;top:313.988px;font-size:13.6px;color:#2e2e2e;transform:scaleY(1.22);transform-origin:0 11.512px;">24, place Klébe<i>r</i></div>
<div class="t" style="left:424.5px;top:314.588px;font-size:13.6px;color:#2e2e2e;transform:scaleY(1.22);transform-origin:0 11.512px;">848.75</div>
<div class="t" style="left:549.5px;top:314.588px;font-size:13.6px;color:#2e2e2e;transform:scaleY(1.22);transform-origin:0 11.512px;">666</div>
<div class="t" style="left:674.5px;top:314.588px;font-size:13.6px;color:#2e2e2e;transform:scaleY(1.22);transform-origin:0 11.512px;">67000</div>
<div class="t" style="left:799.5px;top:314.588px;font-size:13.6px;color:#2e2e2e;transform:scaleY(1.22);transform-origin:0 11.512px;">F<i>r</i>ance</div>
<div class="a" style="left:167px;top:310px;width:2px;height:23px;background:#e2e2e2"></div>
<div class="a" style="left:292px;top:310px;width:2px;height:23px;background:#e2e2e2"></div>
<div class="a" style="left:417px;top:310px;width:2px;height:23px;background:#e2e2e2"></div>
<div class="a" style="left:542px;top:310px;width:2px;height:23px;background:#e2e2e2"></div>
<div class="a" style="left:667px;top:310px;width:2px;height:23px;background:#e2e2e2"></div>
<div class="a" style="left:792px;top:310px;width:2px;height:23px;background:#e2e2e2"></div>
<div class="a" style="left:43px;top:334px;width:872px;height:22px;background:#ffffff"></div>
<div class="a" style="left:5px;top:334px;width:37px;height:22px;background:#efefef;border-left:1px solid #fff;border-top:1px solid #fbfbfb"></div>
<div class="a" style="left:42px;top:334px;width:1px;height:22px;background:#d9d9d9"></div>
<div class="a" style="left:5px;top:356px;width:37px;height:1px;background:#a9a9a9"></div>
<div class="a" style="left:42px;top:356px;width:873px;height:1px;background:#d6d6d6"></div>
<div class="t" style="left:50px;top:338.338px;font-size:13.6px;color:#2e2e2e;transform:scaleY(1.22);transform-origin:0 11.512px;">Ou<i>t</i>pu<i>t</i></div>
<div class="t" style="left:174.5px;top:337.138px;font-size:13.6px;color:#2e2e2e;transform:scaleY(1.22);transform-origin:0 11.512px;">Bon app&#x27;</div>
<div class="t" style="left:299.5px;top:337.738px;font-size:13.6px;color:#2e2e2e;transform:scaleY(1.22);transform-origin:0 11.512px;">12, <i>r</i>ue de<i>s</i> Bouc</div>
<div class="t" style="left:424.5px;top:338.338px;font-size:13.6px;color:#2e2e2e;transform:scaleY(1.22);transform-origin:0 11.512px;">1061.45</div>
<div class="t" style="left:549.5px;top:338.338px;font-size:13.6px;color:#2e2e2e;transform:scaleY(1.22);transform-origin:0 11.512px;">980</div>
<div class="t" style="left:674.5px;top:338.338px;font-size:13.6px;color:#2e2e2e;transform:scaleY(1.22);transform-origin:0 11.512px;">13008</div>
<div class="t" style="left:799.5px;top:338.338px;font-size:13.6px;color:#2e2e2e;transform:scaleY(1.22);transform-origin:0 11.512px;">F<i>r</i>ance</div>
<div class="a" style="left:167px;top:334px;width:2px;height:22px;background:#e2e2e2"></div>
<div class="a" style="left:292px;top:334px;width:2px;height:22px;background:#e2e2e2"></div>
<div class="a" style="left:417px;top:334px;width:2px;height:22px;background:#e2e2e2"></div>
<div class="a" style="left:542px;top:334px;width:2px;height:22px;background:#e2e2e2"></div>
<div class="a" style="left:667px;top:334px;width:2px;height:22px;background:#e2e2e2"></div>
<div class="a" style="left:792px;top:334px;width:2px;height:22px;background:#e2e2e2"></div>
<div class="a" style="left:43px;top:357px;width:872px;height:23px;background:#f4f4f4"></div>
<div class="a" style="left:5px;top:357px;width:37px;height:23px;background:#efefef;border-left:1px solid #fff;border-top:1px solid #fbfbfb"></div>
<div class="a" style="left:42px;top:357px;width:1px;height:23px;background:#d9d9d9"></div>
<div class="a" style="left:5px;top:380px;width:37px;height:1px;background:#a9a9a9"></div>
<div class="a" style="left:42px;top:380px;width:873px;height:1px;background:#d6d6d6"></div>
<div class="t" style="left:50px;top:362.088px;font-size:13.6px;color:#2e2e2e;transform:scaleY(1.22);transform-origin:0 11.512px;">Ou<i>t</i>pu<i>t</i></div>
<div class="t" style="left:174.5px;top:360.888px;font-size:13.6px;color:#2e2e2e;transform:scaleY(1.22);transform-origin:0 11.512px;">Bo<i>t</i><i>t</i>om-Dolla<i>r</i> Ma</div>
<div class="t" style="left:299.5px;top:361.488px;font-size:13.6px;color:#2e2e2e;transform:scaleY(1.22);transform-origin:0 11.512px;">23 T<i>s</i>awa<i>s</i><i>s</i>en Bl</div>
<div class="t" style="left:424.5px;top:362.088px;font-size:13.6px;color:#2e2e2e;transform:scaleY(1.22);transform-origin:0 11.512px;">883.6</div>
<div class="t" style="left:549.5px;top:362.088px;font-size:13.6px;color:#2e2e2e;transform:scaleY(1.22);transform-origin:0 11.512px;">956</div>
<div class="t" style="left:674.5px;top:362.088px;font-size:13.6px;color:#2e2e2e;transform:scaleY(1.22);transform-origin:0 11.512px;">T2F 8M4</div>
<div class="t" style="left:799.5px;top:362.088px;font-size:13.6px;color:#2e2e2e;transform:scaleY(1.22);transform-origin:0 11.512px;">Canada</div>
<div class="a" style="left:167px;top:357px;width:2px;height:23px;background:#e2e2e2"></div>
<div class="a" style="left:292px;top:357px;width:2px;height:23px;background:#e2e2e2"></div>
<div class="a" style="left:417px;top:357px;width:2px;height:23px;background:#e2e2e2"></div>
<div class="a" style="left:542px;top:357px;width:2px;height:23px;background:#e2e2e2"></div>
<div class="a" style="left:667px;top:357px;width:2px;height:23px;background:#e2e2e2"></div>
<div class="a" style="left:792px;top:357px;width:2px;height:23px;background:#e2e2e2"></div>
<div class="a" style="left:43px;top:381px;width:872px;height:23px;background:#ffffff"></div>
<div class="a" style="left:5px;top:381px;width:37px;height:23px;background:#efefef;border-left:1px solid #fff;border-top:1px solid #fbfbfb"></div>
<div class="a" style="left:42px;top:381px;width:1px;height:23px;background:#d9d9d9"></div>
<div class="a" style="left:5px;top:404px;width:37px;height:1px;background:#a9a9a9"></div>
<div class="a" style="left:42px;top:404px;width:873px;height:1px;background:#d6d6d6"></div>
<div class="t" style="left:50px;top:385.838px;font-size:13.6px;color:#2e2e2e;transform:scaleY(1.22);transform-origin:0 11.512px;">Ou<i>t</i>pu<i>t</i></div>
<div class="t" style="left:174.5px;top:384.638px;font-size:13.6px;color:#2e2e2e;transform:scaleY(1.22);transform-origin:0 11.512px;">Bólido Comida<i>s</i> p</div>
<div class="t" style="left:299.5px;top:385.238px;font-size:13.6px;color:#2e2e2e;transform:scaleY(1.22);transform-origin:0 11.512px;">C/ A<i>r</i>aquil, 67</div>
<div class="t" style="left:424.5px;top:385.838px;font-size:13.6px;color:#2e2e2e;transform:scaleY(1.22);transform-origin:0 11.512px;">209.19</div>
<div class="t" style="left:549.5px;top:385.838px;font-size:13.6px;color:#2e2e2e;transform:scaleY(1.22);transform-origin:0 11.512px;">190</div>
<div class="t" style="left:674.5px;top:385.838px;font-size:13.6px;color:#2e2e2e;transform:scaleY(1.22);transform-origin:0 11.512px;">28023</div>
<div class="t" style="left:799.5px;top:385.838px;font-size:13.6px;color:#2e2e2e;transform:scaleY(1.22);transform-origin:0 11.512px;">Spain</div>
<div class="a" style="left:167px;top:381px;width:2px;height:23px;background:#e2e2e2"></div>
<div class="a" style="left:292px;top:381px;width:2px;height:23px;background:#e2e2e2"></div>
<div class="a" style="left:417px;top:381px;width:2px;height:23px;background:#e2e2e2"></div>
<div class="a" style="left:542px;top:381px;width:2px;height:23px;background:#e2e2e2"></div>
<div class="a" style="left:667px;top:381px;width:2px;height:23px;background:#e2e2e2"></div>
<div class="a" style="left:792px;top:381px;width:2px;height:23px;background:#e2e2e2"></div>
<div class="a" style="left:43px;top:405px;width:872px;height:23px;background:#f4f4f4"></div>
<div class="a" style="left:5px;top:405px;width:37px;height:23px;background:#efefef;border-left:1px solid #fff;border-top:1px solid #fbfbfb"></div>
<div class="a" style="left:42px;top:405px;width:1px;height:23px;background:#d9d9d9"></div>
<div class="a" style="left:5px;top:428px;width:37px;height:1px;background:#a9a9a9"></div>
<div class="a" style="left:42px;top:428px;width:873px;height:1px;background:#d6d6d6"></div>
<div class="t" style="left:50px;top:409.588px;font-size:13.6px;color:#2e2e2e;transform:scaleY(1.22);transform-origin:0 11.512px;">Ou<i>t</i>pu<i>t</i></div>
<div class="t" style="left:174.5px;top:408.388px;font-size:13.6px;color:#2e2e2e;transform:scaleY(1.22);transform-origin:0 11.512px;">Cac<i>t</i>u<i>s</i> Comida<i>s</i></div>
<div class="t" style="left:299.5px;top:408.988px;font-size:13.6px;color:#2e2e2e;transform:scaleY(1.22);transform-origin:0 11.512px;">Ce<i>r</i><i>r</i>i<i>t</i>o 333</div>
<div class="t" style="left:424.5px;top:409.588px;font-size:13.6px;color:#2e2e2e;transform:scaleY(1.22);transform-origin:0 11.512px;">197.5</div>
<div class="t" style="left:549.5px;top:409.588px;font-size:13.6px;color:#2e2e2e;transform:scaleY(1.22);transform-origin:0 11.512px;">115</div>
<div class="t" style="left:674.5px;top:409.588px;font-size:13.6px;color:#2e2e2e;transform:scaleY(1.22);transform-origin:0 11.512px;">1010</div>
<div class="t" style="left:799.5px;top:409.588px;font-size:13.6px;color:#2e2e2e;transform:scaleY(1.22);transform-origin:0 11.512px;">A<i>r</i>gen<i>t</i>ina</div>
<div class="a" style="left:167px;top:405px;width:2px;height:23px;background:#e2e2e2"></div>
<div class="a" style="left:292px;top:405px;width:2px;height:23px;background:#e2e2e2"></div>
<div class="a" style="left:417px;top:405px;width:2px;height:23px;background:#e2e2e2"></div>
<div class="a" style="left:542px;top:405px;width:2px;height:23px;background:#e2e2e2"></div>
<div class="a" style="left:667px;top:405px;width:2px;height:23px;background:#e2e2e2"></div>
<div class="a" style="left:792px;top:405px;width:2px;height:23px;background:#e2e2e2"></div>
<div class="a" style="left:43px;top:429px;width:872px;height:22px;background:#ffffff"></div>
<div class="a" style="left:5px;top:429px;width:37px;height:22px;background:#efefef;border-left:1px solid #fff;border-top:1px solid #fbfbfb"></div>
<div class="a" style="left:42px;top:429px;width:1px;height:22px;background:#d9d9d9"></div>
<div class="a" style="left:5px;top:451px;width:37px;height:1px;background:#a9a9a9"></div>
<div class="a" style="left:42px;top:451px;width:873px;height:1px;background:#d6d6d6"></div>
<div class="t" style="left:50px;top:433.338px;font-size:13.6px;color:#2e2e2e;transform:scaleY(1.22);transform-origin:0 11.512px;">Ou<i>t</i>pu<i>t</i></div>
<div class="t" style="left:174.5px;top:432.138px;font-size:13.6px;color:#2e2e2e;transform:scaleY(1.22);transform-origin:0 11.512px;">Cen<i>t</i><i>r</i>o come<i>r</i>cial</div>
<div class="t" style="left:299.5px;top:432.738px;font-size:13.6px;color:#2e2e2e;transform:scaleY(1.22);transform-origin:0 11.512px;">Sie<i>r</i><i>r</i>a<i>s</i> de G<i>r</i>ana</div>
<div class="t" style="left:424.5px;top:433.338px;font-size:13.6px;color:#2e2e2e;transform:scaleY(1.22);transform-origin:0 11.512px;">28.8</div>
<div class="t" style="left:549.5px;top:433.338px;font-size:13.6px;color:#2e2e2e;transform:scaleY(1.22);transform-origin:0 11.512px;">11</div>
<div class="t" style="left:674.5px;top:433.338px;font-size:13.6px;color:#2e2e2e;transform:scaleY(1.22);transform-origin:0 11.512px;">05022</div>
<div class="t" style="left:799.5px;top:433.338px;font-size:13.6px;color:#2e2e2e;transform:scaleY(1.22);transform-origin:0 11.512px;">Mexico</div>
<div class="a" style="left:167px;top:429px;width:2px;height:22px;background:#e2e2e2"></div>
<div class="a" style="left:292px;top:429px;width:2px;height:22px;background:#e2e2e2"></div>
<div class="a" style="left:417px;top:429px;width:2px;height:22px;background:#e2e2e2"></div>
<div class="a" style="left:542px;top:429px;width:2px;height:22px;background:#e2e2e2"></div>
<div class="a" style="left:667px;top:429px;width:2px;height:22px;background:#e2e2e2"></div>
<div class="a" style="left:792px;top:429px;width:2px;height:22px;background:#e2e2e2"></div>
<div class="a" style="left:43px;top:452px;width:872px;height:23px;background:#f4f4f4"></div>
<div class="a" style="left:5px;top:452px;width:37px;height:23px;background:#efefef;border-left:1px solid #fff;border-top:1px solid #fbfbfb"></div>
<div class="a" style="left:42px;top:452px;width:1px;height:23px;background:#d9d9d9"></div>
<div class="a" style="left:5px;top:475px;width:37px;height:1px;background:#a9a9a9"></div>
<div class="a" style="left:42px;top:475px;width:873px;height:1px;background:#d6d6d6"></div>
<div class="t" style="left:50px;top:457.088px;font-size:13.6px;color:#2e2e2e;transform:scaleY(1.22);transform-origin:0 11.512px;">Ou<i>t</i>pu<i>t</i></div>
<div class="t" style="left:174.5px;top:455.888px;font-size:13.6px;color:#2e2e2e;transform:scaleY(1.22);transform-origin:0 11.512px;">Chop-<i>s</i>uey Chine</div>
<div class="t" style="left:299.5px;top:456.488px;font-size:13.6px;color:#2e2e2e;transform:scaleY(1.22);transform-origin:0 11.512px;">Haup<i>t</i><i>s</i><i>t</i><i>r</i>. 29</div>
<div class="t" style="left:424.5px;top:457.088px;font-size:13.6px;color:#2e2e2e;transform:scaleY(1.22);transform-origin:0 11.512px;">609.2</div>
<div class="t" style="left:549.5px;top:457.088px;font-size:13.6px;color:#2e2e2e;transform:scaleY(1.22);transform-origin:0 11.512px;">465</div>
<div class="t" style="left:674.5px;top:457.088px;font-size:13.6px;color:#2e2e2e;transform:scaleY(1.22);transform-origin:0 11.512px;">3012</div>
<div class="t" style="left:799.5px;top:457.088px;font-size:13.6px;color:#2e2e2e;transform:scaleY(1.22);transform-origin:0 11.512px;">Swi<i>t</i>ze<i>r</i>land</div>
<div class="a" style="left:167px;top:452px;width:2px;height:23px;background:#e2e2e2"></div>
<div class="a" style="left:292px;top:452px;width:2px;height:23px;background:#e2e2e2"></div>
<div class="a" style="left:417px;top:452px;width:2px;height:23px;background:#e2e2e2"></div>
<div class="a" style="left:542px;top:452px;width:2px;height:23px;background:#e2e2e2"></div>
<div class="a" style="left:667px;top:452px;width:2px;height:23px;background:#e2e2e2"></div>
<div class="a" style="left:792px;top:452px;width:2px;height:23px;background:#e2e2e2"></div>
<div class="a" style="left:43px;top:476px;width:872px;height:23px;background:#ffffff"></div>
<div class="a" style="left:5px;top:476px;width:37px;height:23px;background:#efefef;border-left:1px solid #fff;border-top:1px solid #fbfbfb"></div>
<div class="a" style="left:42px;top:476px;width:1px;height:23px;background:#d9d9d9"></div>
<div class="a" style="left:5px;top:499px;width:37px;height:1px;background:#a9a9a9"></div>
<div class="a" style="left:42px;top:499px;width:873px;height:1px;background:#d6d6d6"></div>
<div class="t" style="left:50px;top:480.838px;font-size:13.6px;color:#2e2e2e;transform:scaleY(1.22);transform-origin:0 11.512px;">Ou<i>t</i>pu<i>t</i></div>
<div class="t" style="left:174.5px;top:479.638px;font-size:13.6px;color:#2e2e2e;transform:scaleY(1.22);transform-origin:0 11.512px;">Comé<i>r</i>cio Minei<i>r</i>o</div>
<div class="t" style="left:299.5px;top:480.238px;font-size:13.6px;color:#2e2e2e;transform:scaleY(1.22);transform-origin:0 11.512px;">Av. do<i>s</i> Lu<i>s</i>íada<i>s</i>,</div>
<div class="t" style="left:424.5px;top:480.838px;font-size:13.6px;color:#2e2e2e;transform:scaleY(1.22);transform-origin:0 11.512px;">259.15</div>
<div class="t" style="left:549.5px;top:480.838px;font-size:13.6px;color:#2e2e2e;transform:scaleY(1.22);transform-origin:0 11.512px;">133</div>
<div class="t" style="left:674.5px;top:480.838px;font-size:13.6px;color:#2e2e2e;transform:scaleY(1.22);transform-origin:0 11.512px;">05432-043</div>
<div class="t" style="left:799.5px;top:480.838px;font-size:13.6px;color:#2e2e2e;transform:scaleY(1.22);transform-origin:0 11.512px;">B<i>r</i>azil</div>
<div class="a" style="left:167px;top:476px;width:2px;height:23px;background:#e2e2e2"></div>
<div class="a" style="left:292px;top:476px;width:2px;height:23px;background:#e2e2e2"></div>
<div class="a" style="left:417px;top:476px;width:2px;height:23px;background:#e2e2e2"></div>
<div class="a" style="left:542px;top:476px;width:2px;height:23px;background:#e2e2e2"></div>
<div class="a" style="left:667px;top:476px;width:2px;height:23px;background:#e2e2e2"></div>
<div class="a" style="left:792px;top:476px;width:2px;height:23px;background:#e2e2e2"></div>
<div class="a" style="left:43px;top:500px;width:872px;height:23px;background:#f4f4f4"></div>
<div class="a" style="left:5px;top:500px;width:37px;height:23px;background:#efefef;border-left:1px solid #fff;border-top:1px solid #fbfbfb"></div>
<div class="a" style="left:42px;top:500px;width:1px;height:23px;background:#d9d9d9"></div>
<div class="a" style="left:5px;top:523px;width:37px;height:1px;background:#a9a9a9"></div>
<div class="a" style="left:42px;top:523px;width:873px;height:1px;background:#d6d6d6"></div>
<div class="t" style="left:50px;top:504.588px;font-size:13.6px;color:#2e2e2e;transform:scaleY(1.22);transform-origin:0 11.512px;">Ou<i>t</i>pu<i>t</i></div>
<div class="t" style="left:174.5px;top:503.388px;font-size:13.6px;color:#2e2e2e;transform:scaleY(1.22);transform-origin:0 11.512px;">Con<i>s</i>olida<i>t</i>ed Hol</div>
<div class="t" style="left:299.5px;top:503.988px;font-size:13.6px;color:#2e2e2e;transform:scaleY(1.22);transform-origin:0 11.512px;">Be<i>r</i>keley Ga<i>r</i>den<i>s</i></div>
<div class="t" style="left:424.5px;top:504.588px;font-size:13.6px;color:#2e2e2e;transform:scaleY(1.22);transform-origin:0 11.512px;">190.15</div>
<div class="t" style="left:549.5px;top:504.588px;font-size:13.6px;color:#2e2e2e;transform:scaleY(1.22);transform-origin:0 11.512px;">87</div>
<div class="t" style="left:674.5px;top:504.588px;font-size:13.6px;color:#2e2e2e;transform:scaleY(1.22);transform-origin:0 11.512px;">WX1 6LT</div>
<div class="t" style="left:799.5px;top:504.588px;font-size:13.6px;color:#2e2e2e;transform:scaleY(1.22);transform-origin:0 11.512px;">UK</div>
<div class="a" style="left:167px;top:500px;width:2px;height:23px;background:#e2e2e2"></div>
<div class="a" style="left:292px;top:500px;width:2px;height:23px;background:#e2e2e2"></div>
<div class="a" style="left:417px;top:500px;width:2px;height:23px;background:#e2e2e2"></div>
<div class="a" style="left:542px;top:500px;width:2px;height:23px;background:#e2e2e2"></div>
<div class="a" style="left:667px;top:500px;width:2px;height:23px;background:#e2e2e2"></div>
<div class="a" style="left:792px;top:500px;width:2px;height:23px;background:#e2e2e2"></div>
<div class="a" style="left:43px;top:524px;width:872px;height:22px;background:#ffffff"></div>
<div class="a" style="left:5px;top:524px;width:37px;height:22px;background:#efefef;border-left:1px solid #fff;border-top:1px solid #fbfbfb"></div>
<div class="a" style="left:42px;top:524px;width:1px;height:22px;background:#d9d9d9"></div>
<div class="a" style="left:5px;top:546px;width:37px;height:1px;background:#a9a9a9"></div>
<div class="a" style="left:42px;top:546px;width:873px;height:1px;background:#d6d6d6"></div>
<div class="t" style="left:50px;top:528.338px;font-size:13.6px;color:#2e2e2e;transform:scaleY(1.22);transform-origin:0 11.512px;">Ou<i>t</i>pu<i>t</i></div>
<div class="t" style="left:174.5px;top:527.138px;font-size:13.6px;color:#2e2e2e;transform:scaleY(1.22);transform-origin:0 11.512px;">Die Wande<i>r</i>nde K</div>
<div class="t" style="left:299.5px;top:527.738px;font-size:13.6px;color:#2e2e2e;transform:scaleY(1.22);transform-origin:0 11.512px;">Adenaue<i>r</i>allee 90</div>
<div class="t" style="left:424.5px;top:528.338px;font-size:13.6px;color:#2e2e2e;transform:scaleY(1.22);transform-origin:0 11.512px;">561.25</div>
<div class="t" style="left:549.5px;top:528.338px;font-size:13.6px;color:#2e2e2e;transform:scaleY(1.22);transform-origin:0 11.512px;">492</div>
<div class="t" style="left:674.5px;top:528.338px;font-size:13.6px;color:#2e2e2e;transform:scaleY(1.22);transform-origin:0 11.512px;">70563</div>
<div class="t" style="left:799.5px;top:528.338px;font-size:13.6px;color:#2e2e2e;transform:scaleY(1.22);transform-origin:0 11.512px;">Ge<i>r</i>many</div>
<div class="a" style="left:167px;top:524px;width:2px;height:22px;background:#e2e2e2"></div>
<div class="a" style="left:292px;top:524px;width:2px;height:22px;background:#e2e2e2"></div>
<div class="a" style="left:417px;top:524px;width:2px;height:22px;background:#e2e2e2"></div>
<div class="a" style="left:542px;top:524px;width:2px;height:22px;background:#e2e2e2"></div>
<div class="a" style="left:667px;top:524px;width:2px;height:22px;background:#e2e2e2"></div>
<div class="a" style="left:792px;top:524px;width:2px;height:22px;background:#e2e2e2"></div>
<div class="a" style="left:43px;top:547px;width:872px;height:23px;background:#f4f4f4"></div>
<div class="a" style="left:5px;top:547px;width:37px;height:23px;background:#efefef;border-left:1px solid #fff;border-top:1px solid #fbfbfb"></div>
<div class="a" style="left:42px;top:547px;width:1px;height:23px;background:#d9d9d9"></div>
<div class="a" style="left:5px;top:570px;width:37px;height:1px;background:#a9a9a9"></div>
<div class="a" style="left:42px;top:570px;width:873px;height:1px;background:#d6d6d6"></div>
<div class="t" style="left:50px;top:552.088px;font-size:13.6px;color:#2e2e2e;transform:scaleY(1.22);transform-origin:0 11.512px;">Ou<i>t</i>pu<i>t</i></div>
<div class="t" style="left:174.5px;top:550.888px;font-size:13.6px;color:#2e2e2e;transform:scaleY(1.22);transform-origin:0 11.512px;">D<i>r</i>achenblu<i>t</i> Delik</div>
<div class="t" style="left:299.5px;top:551.488px;font-size:13.6px;color:#2e2e2e;transform:scaleY(1.22);transform-origin:0 11.512px;">Wal<i>s</i>e<i>r</i>weg 21</div>
<div class="t" style="left:424.5px;top:552.088px;font-size:13.6px;color:#2e2e2e;transform:scaleY(1.22);transform-origin:0 11.512px;">191.08</div>
<div class="t" style="left:549.5px;top:552.088px;font-size:13.6px;color:#2e2e2e;transform:scaleY(1.22);transform-origin:0 11.512px;">160</div>
<div class="t" style="left:674.5px;top:552.088px;font-size:13.6px;color:#2e2e2e;transform:scaleY(1.22);transform-origin:0 11.512px;">52066</div>
<div class="t" style="left:799.5px;top:552.088px;font-size:13.6px;color:#2e2e2e;transform:scaleY(1.22);transform-origin:0 11.512px;">Ge<i>r</i>many</div>
<div class="a" style="left:167px;top:547px;width:2px;height:23px;background:#e2e2e2"></div>
<div class="a" style="left:292px;top:547px;width:2px;height:23px;background:#e2e2e2"></div>
<div class="a" style="left:417px;top:547px;width:2px;height:23px;background:#e2e2e2"></div>
<div class="a" style="left:542px;top:547px;width:2px;height:23px;background:#e2e2e2"></div>
<div class="a" style="left:667px;top:547px;width:2px;height:23px;background:#e2e2e2"></div>
<div class="a" style="left:792px;top:547px;width:2px;height:23px;background:#e2e2e2"></div>
<div class="a" style="left:43px;top:571px;width:872px;height:23px;background:#ffffff"></div>
<div class="a" style="left:5px;top:571px;width:37px;height:23px;background:#efefef;border-left:1px solid #fff;border-top:1px solid #fbfbfb"></div>
<div class="a" style="left:42px;top:571px;width:1px;height:23px;background:#d9d9d9"></div>
<div class="a" style="left:5px;top:594px;width:37px;height:1px;background:#a9a9a9"></div>
<div class="a" style="left:42px;top:594px;width:873px;height:1px;background:#d6d6d6"></div>
<div class="t" style="left:50px;top:575.838px;font-size:13.6px;color:#2e2e2e;transform:scaleY(1.22);transform-origin:0 11.512px;">Ou<i>t</i>pu<i>t</i></div>
<div class="t" style="left:174.5px;top:574.638px;font-size:13.6px;color:#2e2e2e;transform:scaleY(1.22);transform-origin:0 11.512px;">Du monde en<i>t</i>ie<i>r</i></div>
<div class="t" style="left:299.5px;top:575.238px;font-size:13.6px;color:#2e2e2e;transform:scaleY(1.22);transform-origin:0 11.512px;">67, <i>r</i>ue de<i>s</i> Cinqu</div>
<div class="t" style="left:424.5px;top:575.838px;font-size:13.6px;color:#2e2e2e;transform:scaleY(1.22);transform-origin:0 11.512px;">168.65</div>
<div class="t" style="left:549.5px;top:575.838px;font-size:13.6px;color:#2e2e2e;transform:scaleY(1.22);transform-origin:0 11.512px;">80</div>
<div class="t" style="left:674.5px;top:575.838px;font-size:13.6px;color:#2e2e2e;transform:scaleY(1.22);transform-origin:0 11.512px;">44000</div>
<div class="t" style="left:799.5px;top:575.838px;font-size:13.6px;color:#2e2e2e;transform:scaleY(1.22);transform-origin:0 11.512px;">F<i>r</i>ance</div>
<div class="a" style="left:167px;top:571px;width:2px;height:23px;background:#e2e2e2"></div>
<div class="a" style="left:292px;top:571px;width:2px;height:23px;background:#e2e2e2"></div>
<div class="a" style="left:417px;top:571px;width:2px;height:23px;background:#e2e2e2"></div>
<div class="a" style="left:542px;top:571px;width:2px;height:23px;background:#e2e2e2"></div>
<div class="a" style="left:667px;top:571px;width:2px;height:23px;background:#e2e2e2"></div>
<div class="a" style="left:792px;top:571px;width:2px;height:23px;background:#e2e2e2"></div>
<div class="a" style="left:43px;top:595px;width:872px;height:23px;background:#f4f4f4"></div>
<div class="a" style="left:5px;top:595px;width:37px;height:23px;background:#efefef;border-left:1px solid #fff;border-top:1px solid #fbfbfb"></div>
<div class="a" style="left:42px;top:595px;width:1px;height:23px;background:#d9d9d9"></div>
<div class="a" style="left:5px;top:618px;width:37px;height:1px;background:#a9a9a9"></div>
<div class="a" style="left:42px;top:618px;width:873px;height:1px;background:#d6d6d6"></div>
<div class="t" style="left:50px;top:599.588px;font-size:13.6px;color:#2e2e2e;transform:scaleY(1.22);transform-origin:0 11.512px;">Ou<i>t</i>pu<i>t</i></div>
<div class="t" style="left:174.5px;top:598.388px;font-size:13.6px;color:#2e2e2e;transform:scaleY(1.22);transform-origin:0 11.512px;">Ea<i>s</i><i>t</i>e<i>r</i>n Connec<i>t</i>i</div>
<div class="t" style="left:299.5px;top:598.988px;font-size:13.6px;color:#2e2e2e;transform:scaleY(1.22);transform-origin:0 11.512px;">35 King Geo<i>r</i>ge</div>
<div class="t" style="left:424.5px;top:599.588px;font-size:13.6px;color:#2e2e2e;transform:scaleY(1.22);transform-origin:0 11.512px;">575.72</div>
<div class="t" style="left:549.5px;top:599.588px;font-size:13.6px;color:#2e2e2e;transform:scaleY(1.22);transform-origin:0 11.512px;">569</div>
<div class="t" style="left:674.5px;top:599.588px;font-size:13.6px;color:#2e2e2e;transform:scaleY(1.22);transform-origin:0 11.512px;">WX3 6FW</div>
<div class="t" style="left:799.5px;top:599.588px;font-size:13.6px;color:#2e2e2e;transform:scaleY(1.22);transform-origin:0 11.512px;">UK</div>
<div class="a" style="left:167px;top:595px;width:2px;height:23px;background:#e2e2e2"></div>
<div class="a" style="left:292px;top:595px;width:2px;height:23px;background:#e2e2e2"></div>
<div class="a" style="left:417px;top:595px;width:2px;height:23px;background:#e2e2e2"></div>
<div class="a" style="left:542px;top:595px;width:2px;height:23px;background:#e2e2e2"></div>
<div class="a" style="left:667px;top:595px;width:2px;height:23px;background:#e2e2e2"></div>
<div class="a" style="left:792px;top:595px;width:2px;height:23px;background:#e2e2e2"></div>
<div class="a" style="left:43px;top:619px;width:872px;height:22px;background:#ffffff"></div>
<div class="a" style="left:5px;top:619px;width:37px;height:22px;background:#efefef;border-left:1px solid #fff;border-top:1px solid #fbfbfb"></div>
<div class="a" style="left:42px;top:619px;width:1px;height:22px;background:#d9d9d9"></div>
<div class="a" style="left:5px;top:641px;width:37px;height:1px;background:#a9a9a9"></div>
<div class="a" style="left:42px;top:641px;width:873px;height:1px;background:#d6d6d6"></div>
<div class="t" style="left:50px;top:623.338px;font-size:13.6px;color:#2e2e2e;transform:scaleY(1.22);transform-origin:0 11.512px;">Ou<i>t</i>pu<i>t</i></div>
<div class="t" style="left:174.5px;top:622.138px;font-size:13.6px;color:#2e2e2e;transform:scaleY(1.22);transform-origin:0 11.512px;">E<i>r</i>n<i>s</i><i>t</i> Handel</div>
<div class="t" style="left:299.5px;top:622.738px;font-size:13.6px;color:#2e2e2e;transform:scaleY(1.22);transform-origin:0 11.512px;">Ki<i>r</i>chga<i>s</i><i>s</i>e 6</div>
<div class="t" style="left:424.5px;top:623.338px;font-size:13.6px;color:#2e2e2e;transform:scaleY(1.22);transform-origin:0 11.512px;">2666.67</div>
<div class="t" style="left:549.5px;top:623.338px;font-size:13.6px;color:#2e2e2e;transform:scaleY(1.22);transform-origin:0 11.512px;">4543</div>
<div class="t" style="left:674.5px;top:623.338px;font-size:13.6px;color:#2e2e2e;transform:scaleY(1.22);transform-origin:0 11.512px;">8010</div>
<div class="t" style="left:799.5px;top:623.338px;font-size:13.6px;color:#2e2e2e;transform:scaleY(1.22);transform-origin:0 11.512px;">Au<i>s</i><i>t</i><i>r</i>ia</div>
<div class="a" style="left:167px;top:619px;width:2px;height:22px;background:#e2e2e2"></div>
<div class="a" style="left:292px;top:619px;width:2px;height:22px;background:#e2e2e2"></div>
<div class="a" style="left:417px;top:619px;width:2px;height:22px;background:#e2e2e2"></div>
<div class="a" style="left:542px;top:619px;width:2px;height:22px;background:#e2e2e2"></div>
<div class="a" style="left:667px;top:619px;width:2px;height:22px;background:#e2e2e2"></div>
<div class="a" style="left:792px;top:619px;width:2px;height:22px;background:#e2e2e2"></div>
<div class="a" style="left:43px;top:642px;width:872px;height:23px;background:#f4f4f4"></div>
<div class="a" style="left:5px;top:642px;width:37px;height:23px;background:#efefef;border-left:1px solid #fff;border-top:1px solid #fbfbfb"></div>
<div class="a" style="left:42px;top:642px;width:1px;height:23px;background:#d9d9d9"></div>
<div class="a" style="left:5px;top:665px;width:37px;height:1px;background:#a9a9a9"></div>
<div class="a" style="left:42px;top:665px;width:873px;height:1px;background:#d6d6d6"></div>
<div class="t" style="left:50px;top:647.088px;font-size:13.6px;color:#2e2e2e;transform:scaleY(1.22);transform-origin:0 11.512px;">Ou<i>t</i>pu<i>t</i></div>
<div class="t" style="left:174.5px;top:645.888px;font-size:13.6px;color:#2e2e2e;transform:scaleY(1.22);transform-origin:0 11.512px;">Familia A<i>r</i>quibald</div>
<div class="t" style="left:299.5px;top:646.488px;font-size:13.6px;color:#2e2e2e;transform:scaleY(1.22);transform-origin:0 11.512px;">Rua O<i>r</i>ó<i>s</i>, 92</div>
<div class="t" style="left:424.5px;top:647.088px;font-size:13.6px;color:#2e2e2e;transform:scaleY(1.22);transform-origin:0 11.512px;">245.14</div>
<div class="t" style="left:549.5px;top:647.088px;font-size:13.6px;color:#2e2e2e;transform:scaleY(1.22);transform-origin:0 11.512px;">357</div>
<div class="t" style="left:674.5px;top:647.088px;font-size:13.6px;color:#2e2e2e;transform:scaleY(1.22);transform-origin:0 11.512px;">05442-030</div>
<div class="t" style="left:799.5px;top:647.088px;font-size:13.6px;color:#2e2e2e;transform:scaleY(1.22);transform-origin:0 11.512px;">B<i>r</i>azil</div>
<div class="a" style="left:167px;top:642px;width:2px;height:23px;background:#e2e2e2"></div>
<div class="a" style="left:292px;top:642px;width:2px;height:23px;background:#e2e2e2"></div>
<div class="a" style="left:417px;top:642px;width:2px;height:23px;background:#e2e2e2"></div>
<div class="a" style="left:542px;top:642px;width:2px;height:23px;background:#e2e2e2"></div>
<div class="a" style="left:667px;top:642px;width:2px;height:23px;background:#e2e2e2"></div>
<div class="a" style="left:792px;top:642px;width:2px;height:23px;background:#e2e2e2"></div>
<div class="a" style="left:43px;top:666px;width:872px;height:23px;background:#ffffff"></div>
<div class="a" style="left:5px;top:666px;width:37px;height:23px;background:#efefef;border-left:1px solid #fff;border-top:1px solid #fbfbfb"></div>
<div class="a" style="left:42px;top:666px;width:1px;height:23px;background:#d9d9d9"></div>
<div class="a" style="left:5px;top:689px;width:37px;height:1px;background:#a9a9a9"></div>
<div class="a" style="left:42px;top:689px;width:873px;height:1px;background:#d6d6d6"></div>
<div class="t" style="left:50px;top:670.838px;font-size:13.6px;color:#2e2e2e;transform:scaleY(1.22);transform-origin:0 11.512px;">Ou<i>t</i>pu<i>t</i></div>
<div class="t" style="left:174.5px;top:669.638px;font-size:13.6px;color:#2e2e2e;transform:scaleY(1.22);transform-origin:0 11.512px;">Folie<i>s</i> gou<i>r</i>mande</div>
<div class="t" style="left:299.5px;top:670.238px;font-size:13.6px;color:#2e2e2e;transform:scaleY(1.22);transform-origin:0 11.512px;">184, chau<i>s</i><i>s</i>ée de</div>
<div class="t" style="left:424.5px;top:670.838px;font-size:13.6px;color:#2e2e2e;transform:scaleY(1.22);transform-origin:0 11.512px;">443.35</div>
<div class="t" style="left:549.5px;top:670.838px;font-size:13.6px;color:#2e2e2e;transform:scaleY(1.22);transform-origin:0 11.512px;">354</div>
<div class="t" style="left:674.5px;top:670.838px;font-size:13.6px;color:#2e2e2e;transform:scaleY(1.22);transform-origin:0 11.512px;">59000</div>
<div class="t" style="left:799.5px;top:670.838px;font-size:13.6px;color:#2e2e2e;transform:scaleY(1.22);transform-origin:0 11.512px;">F<i>r</i>ance</div>
<div class="a" style="left:167px;top:666px;width:2px;height:23px;background:#e2e2e2"></div>
<div class="a" style="left:292px;top:666px;width:2px;height:23px;background:#e2e2e2"></div>
<div class="a" style="left:417px;top:666px;width:2px;height:23px;background:#e2e2e2"></div>
<div class="a" style="left:542px;top:666px;width:2px;height:23px;background:#e2e2e2"></div>
<div class="a" style="left:667px;top:666px;width:2px;height:23px;background:#e2e2e2"></div>
<div class="a" style="left:792px;top:666px;width:2px;height:23px;background:#e2e2e2"></div>
<div class="a" style="left:43px;top:690px;width:872px;height:23px;background:#f4f4f4"></div>
<div class="a" style="left:5px;top:690px;width:37px;height:23px;background:#efefef;border-left:1px solid #fff;border-top:1px solid #fbfbfb"></div>
<div class="a" style="left:42px;top:690px;width:1px;height:23px;background:#d9d9d9"></div>
<div class="t" style="left:50px;top:694.588px;font-size:13.6px;color:#2e2e2e;transform:scaleY(1.22);transform-origin:0 11.512px;">Ou<i>t</i>pu<i>t</i></div>
<div class="t" style="left:174.5px;top:693.388px;font-size:13.6px;color:#2e2e2e;transform:scaleY(1.22);transform-origin:0 11.512px;">Folk och <i>f</i>ä HB</div>
<div class="t" style="left:299.5px;top:693.988px;font-size:13.6px;color:#2e2e2e;transform:scaleY(1.22);transform-origin:0 11.512px;">Åke<i>r</i>ga<i>t</i>an 24</div>
<div class="t" style="left:424.5px;top:694.588px;font-size:13.6px;color:#2e2e2e;transform:scaleY(1.22);transform-origin:0 11.512px;">1060.84</div>
<div class="t" style="left:549.5px;top:694.588px;font-size:13.6px;color:#2e2e2e;transform:scaleY(1.22);transform-origin:0 11.512px;">1234</div>
<div class="t" style="left:674.5px;top:694.588px;font-size:13.6px;color:#2e2e2e;transform:scaleY(1.22);transform-origin:0 11.512px;">S-844 67</div>
<div class="t" style="left:799.5px;top:694.588px;font-size:13.6px;color:#2e2e2e;transform:scaleY(1.22);transform-origin:0 11.512px;">Sweden</div>
<div class="a" style="left:167px;top:690px;width:2px;height:23px;background:#e2e2e2"></div>
<div class="a" style="left:292px;top:690px;width:2px;height:23px;background:#e2e2e2"></div>
<div class="a" style="left:417px;top:690px;width:2px;height:23px;background:#e2e2e2"></div>
<div class="a" style="left:542px;top:690px;width:2px;height:23px;background:#e2e2e2"></div>
<div class="a" style="left:667px;top:690px;width:2px;height:23px;background:#e2e2e2"></div>
<div class="a" style="left:792px;top:690px;width:2px;height:23px;background:#e2e2e2"></div>
<svg class="a" style="left:20px;top:149px" width="8" height="13"><path d="M1 1L7.3 6.6L1 12.2z" fill="#000"/></svg>
<div class="a" style="left:43px;top:144px;width:872px;height:22px;border:1px dotted #333;border-right:none"></div>
<div class="a" style="left:5px;top:712px;width:910px;height:3px;background:#e4e9f0"></div>
<div class="a" style="left:417px;top:115px;width:127px;height:600px;border:3px solid #d7202a"></div>
<div class="a" style="left:541px;top:115px;width:128px;height:600px;border:3px solid #d7202a"></div>
<div class="a" style="left:417px;top:115px;width:1px;height:600px;background:#b81f27"></div>
<div class="a" style="left:541px;top:115px;width:1px;height:600px;background:#b81f27"></div>
<div class="a" style="left:668px;top:115px;width:1px;height:600px;background:#b81f27"></div>
<div class="a" style="left:417px;top:115px;width:252px;height:1px;background:#b81f27"></div>
<div class="a" style="left:417px;top:712px;width:252px;height:1px;background:#c21f28"></div></body></html>
